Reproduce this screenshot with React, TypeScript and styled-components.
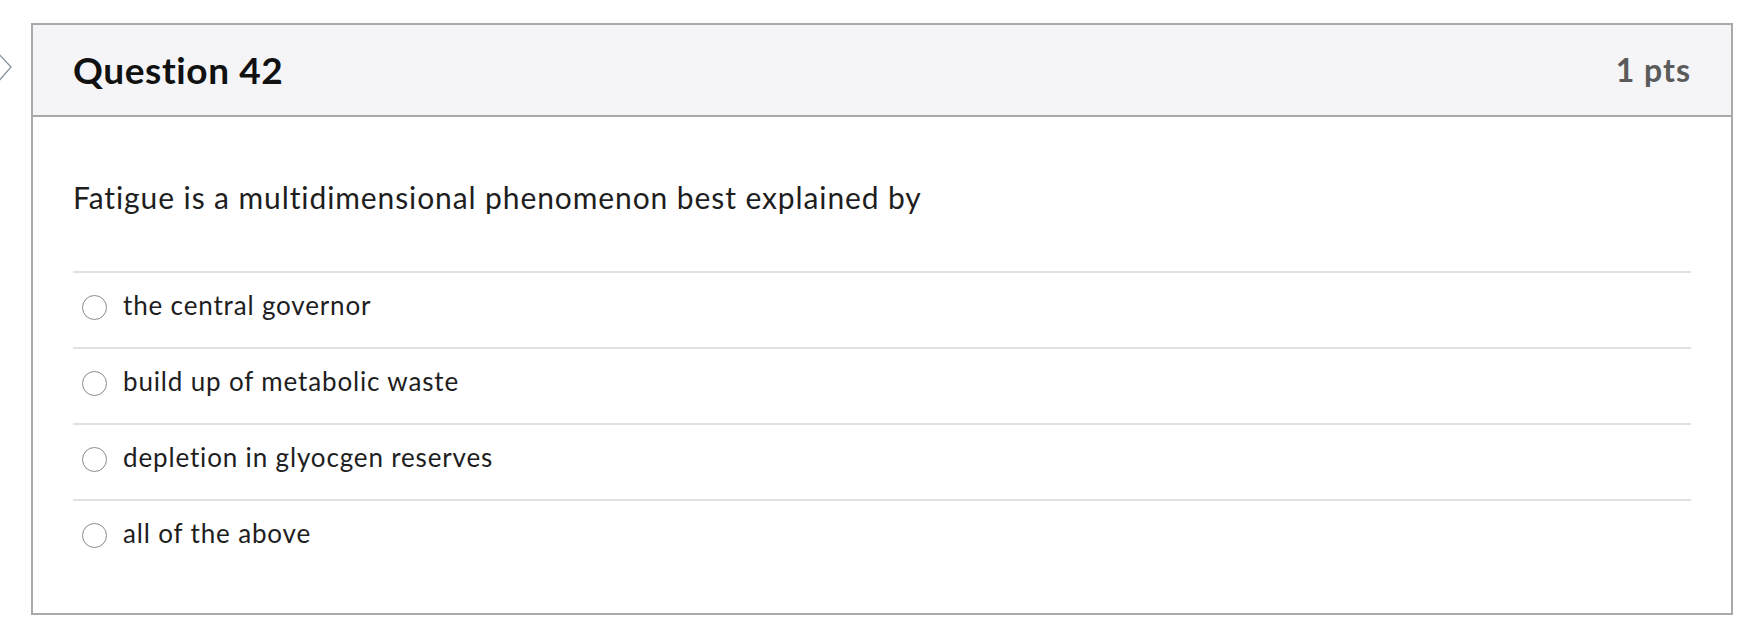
import React from "react";
import styled, { createGlobalStyle } from "styled-components";

const Global = createGlobalStyle`
  html, body { margin: 0; padding: 0; background: #ffffff; }
  body { font-family: Lato, "Noto Sans", "Liberation Sans", sans-serif; }
`;

const Page = styled.div`
  display: flex;
  align-items: flex-start;
  padding-top: 23px;
  width: 1733px;
`;

const Gutter = styled.div`
  width: 31px;
  flex: none;
  padding-top: 29px;
  box-sizing: border-box;
  svg { display: block; margin-left: -3px; }
`;

const Card = styled.section`
  flex: 1;
  border: 2px solid #a9a9a9;
  box-sizing: border-box;
  background: #ffffff;
`;

const Header = styled.header`
  display: flex;
  align-items: center;
  justify-content: space-between;
  height: 90px;
  padding: 0 40px;
  background: #f5f5f7;
  border-bottom: 2px solid #a9a9a9;
`;

const Title = styled.h2`
  margin: 0;
  font-size: 37px;
  line-height: 1.2;
  font-weight: 700;
  letter-spacing: 0.6px;
  color: #111111;
`;

const Points = styled.div`
  font-size: 32px;
  line-height: 1.2;
  font-weight: 700;
  letter-spacing: 1px;
  color: #5b5b5b;
`;

const Body = styled.div`
  padding: 62px 40px 38px;
`;

const Prompt = styled.p`
  margin: 0 0 56px;
  font-size: 30px;
  line-height: 1.2;
  letter-spacing: 0.9px;
  color: #1e1e1e;
`;

const Answers = styled.ul`
  list-style: none;
  margin: 0;
  padding: 0;
`;

const Answer = styled.li`
  display: flex;
  align-items: center;
  height: 76px;
  box-sizing: border-box;
  border-top: 2px solid #e1e1e1;
  padding-left: 9px;
  padding-bottom: 6px;
`;

const Radio = styled.span`
  width: 25px;
  height: 25px;
  flex: none;
  box-sizing: border-box;
  border: 1.5px solid #8a8a8a;
  border-radius: 50%;
  background: #ffffff;
  margin-right: 16px;
`;

const AnswerText = styled.span`
  font-size: 26px;
  line-height: 1.2;
  letter-spacing: 0.85px;
  margin-bottom: 3px;
  color: #1e1e1e;
`;

const answers = [
  "the central governor",
  "build up of metabolic waste",
  "depletion in glyocgen reserves",
  "all of the above",
];

export default function App() {
  return (
    <>
      <Global />
      <Page>
        <Gutter>
          <svg width="16" height="32" viewBox="0 0 16 32">
            <polyline
              points="1,1 14,15 1,30"
              fill="none"
              stroke="#8d9aa6"
              strokeWidth="1.4"
            />
          </svg>
        </Gutter>
        <Card>
          <Header>
            <Title>Question 42</Title>
            <Points>1 pts</Points>
          </Header>
          <Body>
            <Prompt>Fatigue is a multidimensional phenomenon best explained by</Prompt>
            <Answers>
              {answers.map((a) => (
                <Answer key={a}>
                  <Radio />
                  <AnswerText>{a}</AnswerText>
                </Answer>
              ))}
            </Answers>
          </Body>
        </Card>
      </Page>
    </>
  );
}
